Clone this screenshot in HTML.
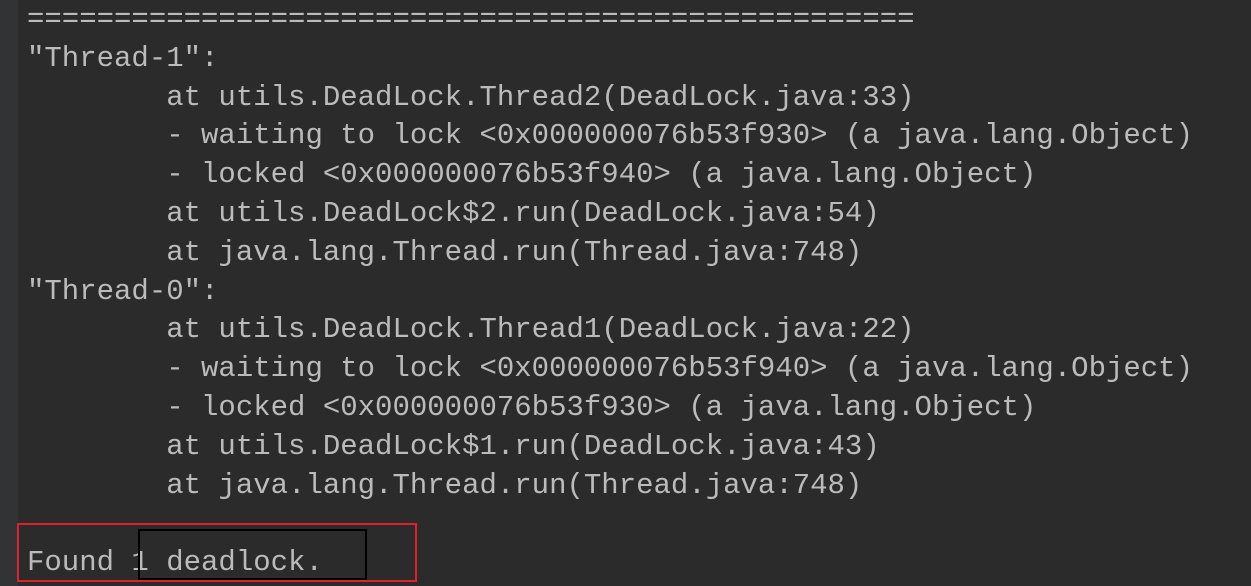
<!DOCTYPE html>
<html><head><style>
body{margin:0;width:1251px;height:586px;background:#2b2b2b;overflow:hidden;position:relative}
.g{position:absolute;left:0;top:0;width:18px;height:586px;background:#313335}
pre{position:absolute;left:27px;top:1px;margin:0;font-family:"Liberation Mono","DejaVu Sans Mono",monospace;font-size:29px;line-height:38.8px;color:#bbbbbb;tab-size:8}
.r{position:absolute;left:17px;top:523px;width:396px;height:55px;border:2px solid #e0202a}
.b{position:absolute;left:138px;top:529px;width:225px;height:47px;border:2px solid #000}
</style></head><body>
<div class="g"></div>
<pre>===================================================
"Thread-1":
        at utils.DeadLock.Thread2(DeadLock.java:33)
        - waiting to lock &lt;0x000000076b53f930&gt; (a java.lang.Object)
        - locked &lt;0x000000076b53f940&gt; (a java.lang.Object)
        at utils.DeadLock$2.run(DeadLock.java:54)
        at java.lang.Thread.run(Thread.java:748)
"Thread-0":
        at utils.DeadLock.Thread1(DeadLock.java:22)
        - waiting to lock &lt;0x000000076b53f940&gt; (a java.lang.Object)
        - locked &lt;0x000000076b53f930&gt; (a java.lang.Object)
        at utils.DeadLock$1.run(DeadLock.java:43)
        at java.lang.Thread.run(Thread.java:748)

Found 1 deadlock.</pre>
<div class="r"></div>
<div class="b"></div>
</body></html>
